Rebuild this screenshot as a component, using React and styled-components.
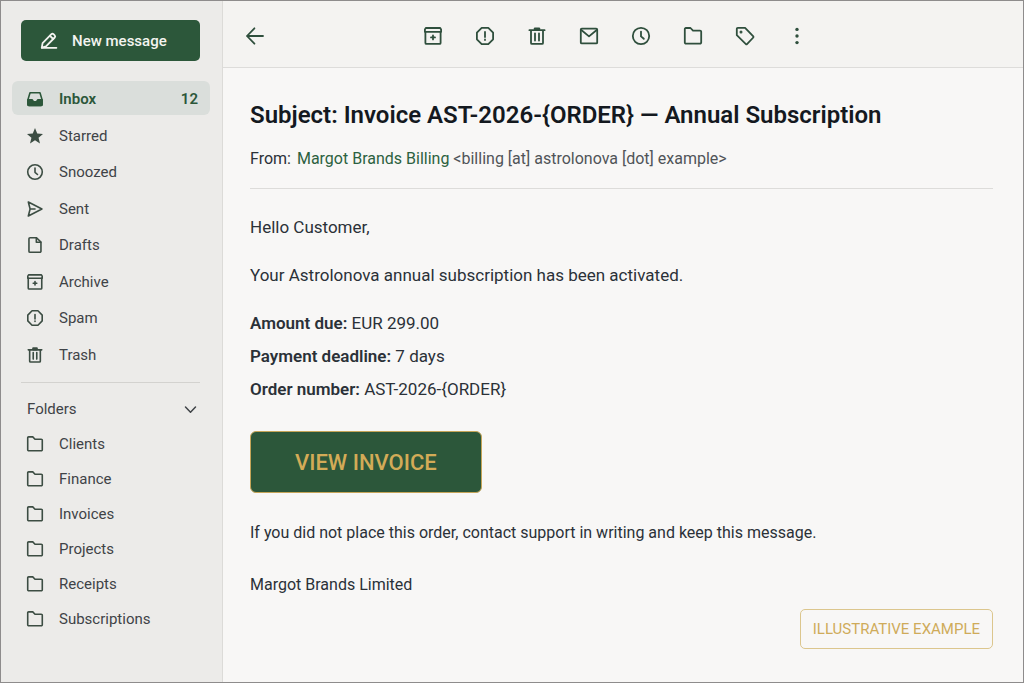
import { useState } from "react";
import styled, { createGlobalStyle } from "styled-components";

const mailboxes = [
  { name: "Inbox", icon: "inbox", count: 12 },
  { name: "Starred", icon: "star" },
  { name: "Snoozed", icon: "clock" },
  { name: "Sent", icon: "send" },
  { name: "Drafts", icon: "file" },
  { name: "Archive", icon: "archive" },
  { name: "Spam", icon: "spam" },
  { name: "Trash", icon: "trash" },
];

const folders = [
  "Clients",
  "Finance",
  "Invoices",
  "Projects",
  "Receipts",
  "Subscriptions",
];

const actions = [
  { label: "Archive", icon: "archive" },
  { label: "Report spam", icon: "spam" },
  { label: "Delete", icon: "trash" },
  { label: "Mark as unread", icon: "mail" },
  { label: "Snooze", icon: "clock" },
  { label: "Move to folder", icon: "folder" },
  { label: "Label", icon: "tag" },
  { label: "More", icon: "more" },
];

const shapes = {
  pencil: (
    <>
      <path d="M2.6 11.2 11.4 2.2a1.5 1.5 0 0 1 2.1 0l1.2 1.2a1.5 1.5 0 0 1 0 2.1L6 14.4l-4.2 1.3z" />
      <path d="M10 3.8l3.2 3.2M1.8 15.8h14.6" />
    </>
  ),
  inbox: (
    <>
      <path d="M3.4 2h11.2l2.4 8v5.2a1 1 0 0 1-1 1H2a1 1 0 0 1-1-1V10z" />
      <path
        d="M1 9.8h4.4c.5 0 .8.3 1 .8.4 1 1.4 1.6 2.6 1.6s2.2-.6 2.6-1.6c.2-.5.5-.8 1-.8H17v5.4a1 1 0 0 1-1 1H2a1 1 0 0 1-1-1z"
        fill="currentColor"
      />
    </>
  ),
  star: (
    <path
      d="M9 0l2.500 6.200 6.500.5-5 4.200 1.600 6.500L9 13.900l-5.600 3.500L5 10.900 0 6.700l6.500-.5z"
      fill="currentColor"
      stroke="none"
    />
  ),
  clock: (
    <>
      <circle cx="9" cy="9" r="8.2" />
      <path d="M9 4.600v4.800l2.800 2.400" />
    </>
  ),
  send: <path d="M1.500 1.100 16.800 9 1.500 16.900 3.500 9zM3.500 9h5.500" />,
  file: (
    <>
      <path d="M3.400.8h7.300l5 5v10.100a1.200 1.200 0 0 1-1.200 1.200H3.400a1.200 1.200 0 0 1-1.200-1.200V2A1.200 1.200 0 0 1 3.400.8z" />
      <path d="M10.500 1v4.900h5" />
    </>
  ),
  archive: (
    <>
      <path d="M1.800 1h14.400l.9 1.400v2.400H.9V2.400z" />
      <path d="M1.400 4.800v11.100c0 .6.4 1 1 1h13.200c.6 0 1-.4 1-1V4.800" />
      <path d="M9 8.400v4M7 10.400h4" />
    </>
  ),
  spam: (
    <>
      <path d="M5.700.9h6.600l4.800 4.800v6.600l-4.800 4.800H5.700L.9 12.300V5.700z" />
      <path d="M9 5v5M9 12.400v.6" />
    </>
  ),
  trash: (
    <>
      <path d="M1.400 3.200h15.200M3 3.200v12.700c0 .6.4 1 1 1h10c.6 0 1-.4 1-1V3.200" />
      <path d="M6.800 2.900V1.300h4.400v1.600z" fill="currentColor" />
      <path d="M7 6.300v7.300M11 6.300v7.300" />
    </>
  ),
  mail: (
    <>
      <rect x=".8" y="1.600" width="16.400" height="14.800" rx="1" />
      <path d="M1 2.800l8 6.600 8-6.600" />
    </>
  ),
  folder: (
    <path d="M1.800 1h4.700l2.500 2.600h7a1.200 1.200 0 0 1 1.200 1.200v10.600a1.200 1.200 0 0 1-1.200 1.200H2a1.200 1.200 0 0 1-1.200-1.200V2a1 1 0 0 1 1-1z" />
  ),
  tag: (
    <>
      <path d="M1.800.9h7.300l8.200 8.500a.8.8 0 0 1 0 1.100L11 17.100a.8.8 0 0 1-1.100 0L.8 8.200V1.900a1 1 0 0 1 1-1z" />
      <circle cx="5" cy="5" r=".6" fill="currentColor" />
    </>
  ),
  more: (
    <g fill="currentColor" stroke="none">
      <circle cx="9" cy="2.400" r="1.700" />
      <circle cx="9" cy="9" r="1.700" />
      <circle cx="9" cy="15.600" r="1.700" />
    </g>
  ),
  back: <path d="M17 9H1M8.400 1.300 1 9l7.400 7.700" />,
  chevron: <path d="M3 6 9 12.200 15 6" />,
};

const Icon = ({ name, size = 16 }) => (
  <IconSvg viewBox="0 0 18 18" $size={size} aria-hidden="true">
    {shapes[name]}
  </IconSvg>
);

const App = () => {
  const [active, setActive] = useState("Inbox");
  const [isFoldersOpen, setIsFoldersOpen] = useState(true);

  return (
    <>
      <GlobalStyle />
      <Window>
        <Sidebar>
          <ComposeButton type="button">
            <Icon name="pencil" size={18} />
            New message
          </ComposeButton>
          <MailboxList>
            {mailboxes.map(({ name, icon, count }) => (
              <li key={name}>
                <MailboxButton
                  type="button"
                  $active={active === name}
                  onClick={() => setActive(name)}
                >
                  <Icon name={icon} />
                  <span>{name}</span>
                  {count && <Count>{count}</Count>}
                </MailboxButton>
              </li>
            ))}
          </MailboxList>
          <SidebarDivider />
          <FoldersToggle
            type="button"
            aria-expanded={isFoldersOpen}
            onClick={() => setIsFoldersOpen((prev) => !prev)}
          >
            Folders
            <Icon name="chevron" size={15} />
          </FoldersToggle>
          {isFoldersOpen && (
            <ul>
              {folders.map((name) => (
                <li key={name}>
                  <FolderButton
                    type="button"
                    $active={active === name}
                    onClick={() => setActive(name)}
                  >
                    <Icon name="folder" />
                    <span>{name}</span>
                  </FolderButton>
                </li>
              ))}
            </ul>
          )}
        </Sidebar>
        <Content>
          <Toolbar>
            <ToolButton type="button" aria-label="Back">
              <Icon name="back" size={18} />
            </ToolButton>
            <Actions>
              {actions.map(({ label, icon }) => (
                <ToolButton key={label} type="button" aria-label={label}>
                  <Icon name={icon} size={18} />
                </ToolButton>
              ))}
            </Actions>
          </Toolbar>
          <Message>
            <Subject>
              Subject: Invoice AST-2026-&#123;ORDER&#125; — Annual Subscription
            </Subject>
            <Sender>
              <b>From:</b> <SenderName>Margot Brands Billing</SenderName>{" "}
              &lt;billing [at] astrolonova [dot] example&gt;
            </Sender>
            <Body>
              <p>Hello Customer,</p>
              <p>Your Astrolonova annual subscription has been activated.</p>
              <Details>
                <div>
                  <dt>Amount due:</dt> <dd>EUR 299.00</dd>
                </div>
                <div>
                  <dt>Payment deadline:</dt> <dd>7 days</dd>
                </div>
                <div>
                  <dt>Order number:</dt> <dd>AST-2026-&#123;ORDER&#125;</dd>
                </div>
              </Details>
              <InvoiceButton type="button">VIEW INVOICE</InvoiceButton>
              <Closing>
                <p>
                  If you did not place this order, contact support in writing
                  and keep this message.
                </p>
                <p>Margot Brands Limited</p>
              </Closing>
            </Body>
            <Stamp>ILLUSTRATIVE EXAMPLE</Stamp>
          </Message>
        </Content>
      </Window>
    </>
  );
};

export default App;

const GlobalStyle = createGlobalStyle`
  * {
    box-sizing: border-box;
  }

  body {
    margin: 0;
    font-family: Roboto, "Liberation Sans", sans-serif;
    color: #2b3138;
  }

  button {
    font: inherit;
    color: inherit;
    border: 0;
    padding: 0;
    background: none;
    cursor: pointer;
  }

  ul, dl, dd, p, h1 {
    margin: 0;
    padding: 0;
    list-style: none;
  }
`;

const IconSvg = styled.svg`
  flex: none;
  width: ${(props) => props.$size}px;
  height: ${(props) => props.$size}px;
  overflow: visible;
  fill: none;
  stroke: currentColor;
  stroke-width: 1.8;
  stroke-linecap: round;
  stroke-linejoin: round;
`;

const Window = styled.div`
  display: flex;
  min-height: 100vh;
  border: 1px solid #8e8c8c;
  background-color: #f8f7f6;
`;

const Sidebar = styled.aside`
  flex: none;
  width: 222px;
  padding: 19px 12px 20px 11px;
  border-right: 1px solid #dcdbd8;
  background-color: #ecebe9;
  font-size: 15px;
  line-height: 20px;
  color: #3f4347;
`;

const ComposeButton = styled.button`
  display: flex;
  align-items: center;
  gap: 14px;
  width: calc(100% - 19px);
  height: 41px;
  margin: 0 10px 20px 9px;
  padding-left: 19px;
  border-radius: 5px;
  background-color: #2c573a;
  color: #f3f4f0;
  font-weight: 500;
`;

const MailboxList = styled.ul`
  display: flex;
  flex-direction: column;
  justify-content: space-between;
  min-height: 290px;
`;

const MailboxButton = styled.button`
  display: flex;
  align-items: center;
  gap: 16px;
  width: 100%;
  height: 34px;
  padding: 2px 12px 0 15px;
  border-radius: 6px;
  text-align: left;

  svg {
    color: #3c4d43;
  }

  ${(props) =>
    props.$active &&
    `
    background-color: #dadedb;
    color: #2c573a;
    font-weight: 600;

    svg {
      color: #2c573a;
    }
  `}
`;

const Count = styled.span`
  margin-left: auto;
`;

const SidebarDivider = styled.hr`
  height: 1px;
  margin: 11px 10px 9px 9px;
  border: 0;
  background-color: #d3d2cf;
`;

const FoldersToggle = styled.button`
  display: flex;
  align-items: center;
  justify-content: space-between;
  width: 100%;
  height: 34px;
  padding: 0 12px 0 15px;
`;

const FolderButton = styled(MailboxButton)`
  height: 35px;
  padding-top: 0;
`;

const Content = styled.main`
  display: flex;
  flex-direction: column;
  flex: 1;
  min-width: 0;
`;

const Toolbar = styled.header`
  display: flex;
  align-items: center;
  height: 67px;
  padding: 4px 20px 0;
  border-bottom: 1px solid #dddcda;
  background-color: #f4f3f1;
  color: #2f4f3d;
`;

const Actions = styled.div`
  display: flex;
  gap: 28px;
  margin-left: 154px;
`;

const ToolButton = styled.button`
  display: grid;
  place-items: center;
  width: 24px;
  height: 24px;
`;

const Message = styled.article`
  display: flex;
  flex-direction: column;
  flex: 1;
  padding: 30px 30px 33px 27px;
`;

const Subject = styled.h1`
  font-size: 24px;
  font-weight: 600;
  line-height: 34px;
  color: #14191f;
`;

const Sender = styled.p`
  padding: 15px 0 17px;
  border-bottom: 1px solid #dddcda;
  font-size: 16px;
  line-height: 24px;
  color: #505458;

  b {
    font-weight: 400;
    color: #2b3138;
    margin-right: 2px;
  }
`;

const SenderName = styled.span`
  color: #2c6140;
`;

const Body = styled.div`
  display: flex;
  flex-direction: column;
  gap: 24px;
  padding-top: 26px;
  font-size: 17px;
  line-height: 24px;
`;

const Details = styled.dl`
  display: flex;
  flex-direction: column;
  gap: 9px;

  dt,
  dd {
    display: inline;
  }

  dt {
    font-weight: 600;
  }
`;

const InvoiceButton = styled.button`
  align-self: flex-start;
  margin: 6px 0 4px;
  padding: 2px 44px 0;
  border: 1px solid #c6a558;
  border-radius: 6px;
  background-color: #2c573a;
  color: #d3ab57;
  font-size: 22px;
  font-weight: 500;
  line-height: 58px;
`;

const Closing = styled.div`
  display: flex;
  flex-direction: column;
  gap: 28px;
  font-size: 16px;
`;

const Stamp = styled.div`
  align-self: flex-end;
  margin-top: auto;
  padding: 0 12px;
  border: 1px solid #dcc68d;
  border-radius: 5px;
  color: #cfab5a;
  font-size: 15px;
  line-height: 38px;
`;
